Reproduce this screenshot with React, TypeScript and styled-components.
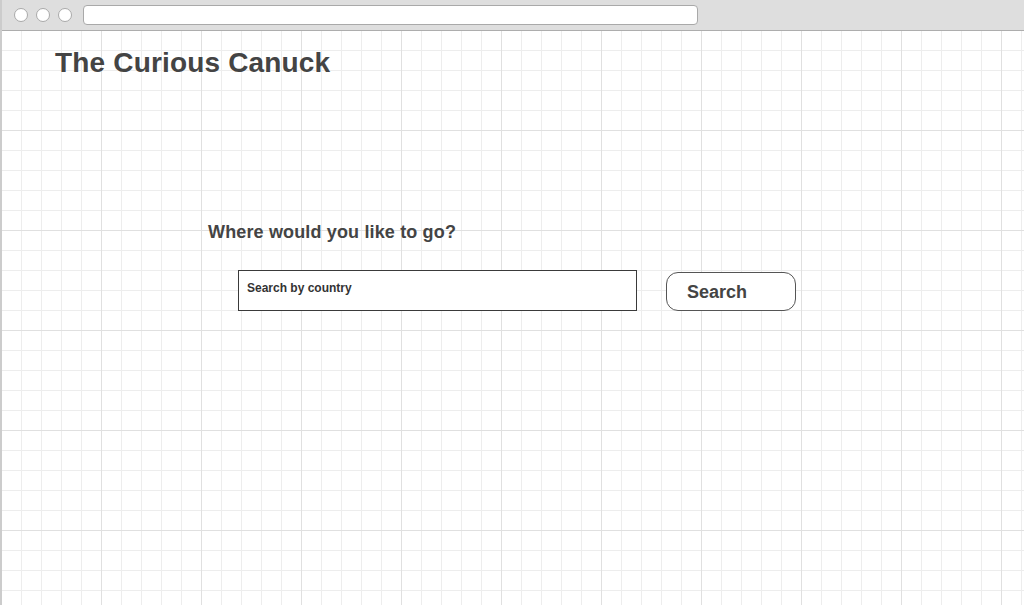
import React from "react";
import styled, { createGlobalStyle } from "styled-components";

const GlobalStyle = createGlobalStyle`
  html, body {
    margin: 0;
    padding: 0;
    background: #ffffff;
  }
  body {
    font-family: "Liberation Sans", Arial, Helvetica, sans-serif;
  }
  * { box-sizing: border-box; }
`;

const Frame = styled.div`
  width: 1024px;
  height: 605px;
  overflow: hidden;
  display: flex;
  flex-direction: column;
  border-left: 2px solid #cccccc;
`;

const Chrome = styled.div`
  height: 31px;
  flex: none;
  display: flex;
  align-items: center;
  gap: 8px;
  padding: 0 0 1px 12px;
  background: #dedede;
  border-bottom: 1px solid #adadad;
`;

const Dot = styled.span`
  width: 14px;
  height: 14px;
  border-radius: 50%;
  background: #ffffff;
  border: 1px solid #a9a9a9;
  flex: none;
`;

const UrlBar = styled.div`
  width: 615px;
  height: 20px;
  margin-left: 3px;
  background: #ffffff;
  border: 1px solid #a9a9a9;
  border-radius: 4px;
`;

const Canvas = styled.main`
  flex: 1;
  display: flex;
  flex-direction: column;
  padding-top: 16px;
  background-color: #ffffff;
  background-image:
    linear-gradient(to right, #e0e0e0 1px, transparent 1px),
    linear-gradient(to bottom, #e0e0e0 1px, transparent 1px),
    linear-gradient(to right, #ededed 1px, transparent 1px),
    linear-gradient(to bottom, #ededed 1px, transparent 1px);
  background-size: 100px 100px, 100px 100px, 20px 20px, 20px 20px;
  background-position: 99px 0, 0 99px, 19px 0, 0 19px;
`;

const Title = styled.h1`
  margin: 0;
  padding-left: 53px;
  font-size: 28px;
  line-height: 32px;
  font-weight: 700;
  letter-spacing: 0.17px;
  color: #444444;
`;

const SearchSection = styled.section`
  margin-top: 142px;
  padding-left: 206px;
  display: flex;
  flex-direction: column;
  gap: 27px;
`;

const Question = styled.h2`
  margin: 0;
  font-size: 18px;
  line-height: 22px;
  font-weight: 700;
  letter-spacing: 0.15px;
  color: #444444;
`;

const SearchRow = styled.div`
  display: flex;
  align-items: flex-start;
  gap: 29px;
  padding-left: 30px;
`;

const CountryInput = styled.input`
  width: 399px;
  height: 41px;
  padding: 0 8px 5px;
  border: 1px solid #3a3a3a;
  border-radius: 0;
  background: #ffffff;
  font-family: "Liberation Sans", Arial, Helvetica, sans-serif;
  font-size: 12px;
  font-weight: 700;
  color: #333333;
  outline: none;
  &::placeholder {
    color: #333333;
    opacity: 1;
  }
`;

const SearchButton = styled.button`
  margin-top: 2px;
  width: 130px;
  height: 39px;
  padding: 2px 0 0 20px;
  text-align: left;
  border: 1px solid #555555;
  border-radius: 12px;
  background: #ffffff;
  font-family: "Liberation Sans", Arial, Helvetica, sans-serif;
  font-size: 18px;
  font-weight: 700;
  color: #444444;
  cursor: pointer;
`;

export default function App() {
  return (
    <>
      <GlobalStyle />
      <Frame>
        <Chrome>
          <Dot />
          <Dot />
          <Dot />
          <UrlBar />
        </Chrome>
        <Canvas>
          <Title>The Curious Canuck</Title>
          <SearchSection>
            <Question>Where would you like to go?</Question>
            <SearchRow>
              <CountryInput placeholder="Search by country" />
              <SearchButton>Search</SearchButton>
            </SearchRow>
          </SearchSection>
        </Canvas>
      </Frame>
    </>
  );
}
